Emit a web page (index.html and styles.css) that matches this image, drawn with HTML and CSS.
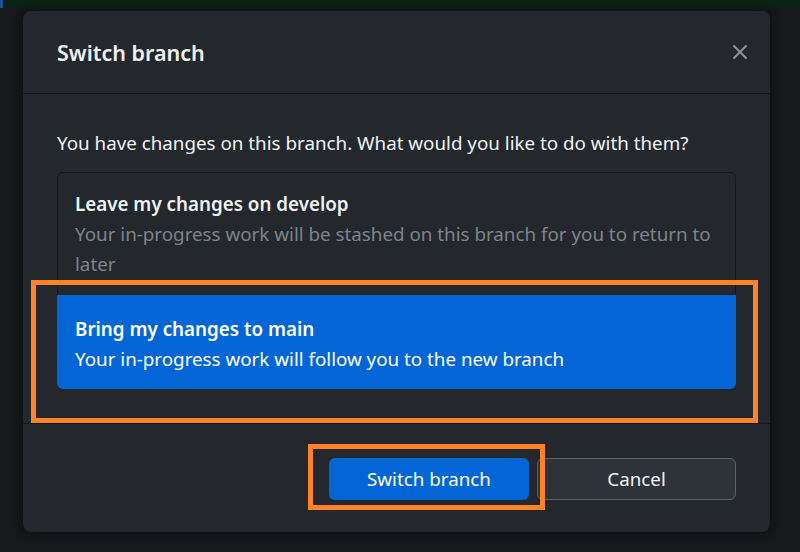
FILE: index.html
```html
<!DOCTYPE html>
<html>
<head>
<meta charset="utf-8">
<link rel="stylesheet" href="styles.css">
</head>
<body>
<div class="topbar"><span class="topbar-accent"></span></div>
<div class="stage">
  <div class="dialog">
    <div class="dialog-header">
      <h1 class="dialog-title">Switch branch</h1>
      <button class="close-btn" aria-label="Close">
        <svg width="16" height="16" viewBox="0 0 16 16"><path d="M1.5 1.5 L14.5 14.5 M14.5 1.5 L1.5 14.5" stroke="#8b929a" stroke-width="2" fill="none"/></svg>
      </button>
    </div>
    <div class="dialog-body">
      <p class="prompt">You have changes on this branch. What would you like to do with them?</p>
      <div class="options">
        <div class="option">
          <div class="option-title">Leave my changes on develop</div>
          <div class="option-desc">Your in-progress work will be stashed on this branch for you to return to later</div>
        </div>
        <div class="option option-selected">
          <div class="option-title">Bring my changes to main</div>
          <div class="option-desc">Your in-progress work will follow you to the new branch</div>
        </div>
      </div>
      <div class="highlight highlight-options"></div>
    </div>
    <div class="dialog-footer">
      <div class="btn-wrap">
        <button class="btn btn-primary">Switch branch</button>
        <div class="highlight highlight-btn"></div>
      </div>
      <button class="btn btn-secondary">Cancel</button>
    </div>
  </div>
</div>
</body>
</html>
```

FILE: styles.css
```css
* { box-sizing: border-box; }
html, body {
  margin: 0;
  padding: 0;
  width: 800px;
  height: 552px;
  overflow: hidden;
  background: #16181b;
  font-family: "Noto Sans", "Open Sans", sans-serif;
  color: #f0f3f6;
}
.topbar {
  height: 8px;
  background: #0a2314;
  display: flex;
}
.topbar-accent {
  width: 3px;
  background: #1d4f9f;
}
.stage {
  padding: 3px 30px 0 23px;
}
.dialog {
  width: 747px;
  height: 521px;
  background: #24282d;
  border-radius: 8px;
  box-shadow: 0 0 10px rgba(0, 0, 0, 0.45);
  display: flex;
  flex-direction: column;
}
.dialog-header {
  height: 83px;
  border-bottom: 1px solid #15171a;
  display: flex;
  align-items: center;
  justify-content: space-between;
  padding: 0 22px 0 34px;
}
.dialog-title {
  margin: 0;
  font-size: 21.5px;
  font-weight: 600;
  color: #f0f3f6;
  line-height: 28px;
  padding-top: 1px;
}
.close-btn {
  background: none;
  border: none;
  padding: 0;
  width: 16px;
  height: 16px;
  margin-bottom: 1px;
  display: flex;
}
.dialog-body {
  position: relative;
  padding: 34px 34px 34px 34px;
  border-bottom: 1px solid #15171a;
}
.prompt {
  margin: 0 0 14px 0;
  font-size: 18.8px;
  line-height: 30px;
  color: #f0f3f6;
}
.options {
  border: 1px solid #16191c;
  border-radius: 6px;
}
.option {
  padding: 16px 18px 16px 17px;
  font-size: 18.8px;
  line-height: 30px;
}
.option-title {
  font-weight: 600;
  color: #f0f3f6;
}
.option-desc {
  color: #7d838b;
}
.option-selected {
  background: #0466d6;
  margin: 0 -1px -1px -1px;
  padding: 19px 18px 15px 18px;
  border-radius: 0 0 6px 6px;
}
.option-selected .option-title,
.option-selected .option-desc {
  color: #ffffff;
}
.highlight {
  position: absolute;
  border: 5px solid #ff8227;
  pointer-events: none;
}
.highlight-options {
  left: 8px;
  top: 186px;
  width: 727px;
  height: 143px;
}
.dialog-footer {
  flex: 1;
  display: flex;
  justify-content: flex-end;
  align-items: center;
  gap: 8px;
  padding: 1px 34px 0 34px;
}
.btn-wrap {
  position: relative;
  display: flex;
}
.btn {
  width: 200px;
  height: 42px;
  border-radius: 6px;
  font-family: "Noto Sans", "Open Sans", sans-serif;
  font-size: 18.8px;
  color: #f0f3f6;
  cursor: pointer;
}
.btn-primary {
  background: #0466d6;
  border: none;
  color: #ffffff;
}
.btn-secondary {
  width: 199px;
  background: #2e333a;
  border: 1px solid #5c6168;
}
.highlight-btn {
  left: -21px;
  top: -14px;
  width: 237px;
  height: 66px;
}
```
